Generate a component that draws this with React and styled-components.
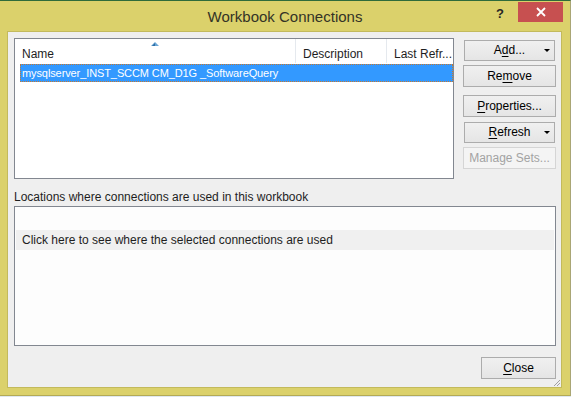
import React from "react";
import styled, { createGlobalStyle } from "styled-components";

const GlobalStyle = createGlobalStyle`
  html, body { margin: 0; padding: 0; background: #dfe8f0; }
  body { font-family: "Liberation Sans", Arial, sans-serif; }
  * { box-sizing: border-box; }
`;

const Window = styled.div`
  width: 571px;
  height: 396px;
  background: #dbd16b;
  border-top: 1px solid #2f6b3a;
  border-right: 1px solid #a9a675;
  border-bottom: 1px solid #b3aa55;
  display: flex;
  flex-direction: column;
  padding-left: 7px;
  padding-right: 8px;
`;

const TitleBar = styled.div`
  height: 30px;
  display: grid;
  grid-template-columns: 1fr auto 1fr;
  align-items: start;
  margin-left: -7px;
  margin-right: -8px;
`;

const Title = styled.div`
  grid-column: 2;
  font-size: 15px;
  line-height: 18px;
  padding-top: 7px;
  color: #333326;
`;

const Controls = styled.div`
  grid-column: 3;
  justify-self: end;
  display: flex;
  align-items: flex-start;
  padding-top: 1px;
  padding-right: 7px;
`;

const HelpButton = styled.div`
  width: 30px;
  height: 20px;
  font-weight: bold;
  font-size: 13px;
  line-height: 20px;
  padding-top: 2px;
  text-align: center;
  color: #262626;
  margin-right: 3px;
`;

const CloseX = styled.div`
  width: 45px;
  height: 20px;
  background: #c75050;
  display: flex;
  align-items: center;
  justify-content: center;
`;

const Client = styled.div`
  position: relative;
  width: 555px;
  height: 357px;
  border: 1px solid #c3ba5c;
  background: #efefef;
  padding: 6px 5px 0 6px;
  display: flex;
  flex-direction: column;
  font-size: 12px;
  color: #000;
`;

const TopRow = styled.div`
  display: flex;
  align-items: flex-start;
`;

const ListBox = styled.div`
  width: 440px;
  height: 141px;
  border: 1px solid #828790;
  background: #fff;
  display: flex;
  flex-direction: column;
`;

const HeaderRow = styled.div`
  display: flex;
  height: 25px;
  background: #fff;
`;

const HeaderCell = styled.div`
  position: relative;
  width: ${(p) => p.$w}px;
  height: 24px;
  padding: 8px 0 0 7px;
  line-height: 15px;
  border-right: ${(p) => (p.$last ? "none" : "1px solid #e5e9ee")};
  white-space: nowrap;
  overflow: hidden;
  color: #1e1e1e;
`;

const SortArrow = styled.svg`
  position: absolute;
  top: 3px;
  left: 50%;
  margin-left: -4px;
`;

const SelectedRow = styled.div`
  margin-left: 5px;
  height: 18px;
  background: #3399ff;
  border: 1px dotted #c9782c;
  color: #fff;
  padding-left: 1px;
  font-size: 11px;
  line-height: 16px;
  letter-spacing: -0.1px;
  white-space: nowrap;
`;

const ButtonColumn = styled.div`
  margin-left: 9px;
  width: 93px;
  padding-top: 1px;
  display: flex;
  flex-direction: column;
`;

const Slot = styled.div`
  height: 22px;
  margin-top: ${(p) => p.$gap || 0}px;
  padding: ${(p) => (p.$split ? "1px 1px 0 1px" : "0")};
  display: flex;
`;

const Button = styled.div`
  position: relative;
  flex: 1;
  height: ${(p) => (p.$split ? 21 : 22)}px;
  border: 1px solid ${(p) => (p.$disabled ? "#d5d5d5" : "#acacac")};
  background: ${(p) =>
    p.$disabled ? "#f4f4f4" : "linear-gradient(#f0f0f0, #e5e5e5)"};
  color: ${(p) => (p.$disabled ? "#a3a3a3" : "#000")};
  display: flex;
  align-items: center;
  justify-content: center;
  line-height: 15px;
  white-space: nowrap;
`;

const DropArrow = styled.svg`
  position: absolute;
  right: 4px;
  top: 8px;
`;

const U = styled.span`
  text-decoration: underline;
  text-underline-offset: 2px;
`;

const SectionLabel = styled.div`
  margin-top: 10px;
  line-height: 17px;
  color: #1e1e1e;
`;

const LocationsBox = styled.div`
  width: 542px;
  height: 140px;
  border: 1px solid #828790;
  background: #fdfdfd;
  padding: 23px 1px 0 1px;
`;

const LocationRow = styled.div`
  height: 20px;
  background: #f0f0f0;
  padding-left: 6px;
  line-height: 20px;
  color: #1e1e1e;
`;

const Footer = styled.div`
  margin-top: 11px;
  display: flex;
  justify-content: flex-end;
`;

const CloseButton = styled(Button)`
  flex: none;
  width: 75px;
  height: 22px;
`;

const Grip = styled.svg`
  position: absolute;
  right: 0;
  bottom: 0;
`;

const Arrow = () => (
  <DropArrow width="6" height="4" viewBox="0 0 6 4">
    <path d="M0 0 H6 L3 3 Z" fill="#000" />
  </DropArrow>
);

export default function App() {
  return (
    <>
      <GlobalStyle />
      <Window>
        <TitleBar>
          <Title>Workbook Connections</Title>
          <Controls>
            <HelpButton>?</HelpButton>
            <CloseX>
              <svg width="10" height="10" viewBox="0 0 10 10">
                <path d="M1 1 L9 9 M9 1 L1 9" stroke="#fff" strokeWidth="1.8" />
              </svg>
            </CloseX>
          </Controls>
        </TitleBar>
        <Client>
          <TopRow>
            <ListBox>
              <HeaderRow>
                <HeaderCell $w={281}>
                  <SortArrow width="8" height="4" viewBox="0 0 8 4">
                    <path d="M0 4 L4 0 L8 4 Z" fill="#6aa6d6" />
                    <path d="M1 4 L4 1 L4 4 Z" fill="#2f6fa6" />
                  </SortArrow>
                  Name
                </HeaderCell>
                <HeaderCell $w={91}>Description</HeaderCell>
                <HeaderCell $w={66} $last>Last Refr...</HeaderCell>
              </HeaderRow>
              <SelectedRow>mysqlserver_INST_SCCM CM_D1G _SoftwareQuery</SelectedRow>
            </ListBox>
            <ButtonColumn>
              <Slot $split>
                <Button $split>
                  <span>A<U>d</U>d...</span>
                  <Arrow />
                </Button>
              </Slot>
              <Slot $gap={4}>
                <Button>
                  <span>Re<U>m</U>ove</span>
                </Button>
              </Slot>
              <Slot $gap={8}>
                <Button>
                  <span><U>P</U>roperties...</span>
                </Button>
              </Slot>
              <Slot $gap={4} $split>
                <Button $split>
                  <span><U>R</U>efresh</span>
                  <Arrow />
                </Button>
              </Slot>
              <Slot $gap={4}>
                <Button $disabled>Manage Sets...</Button>
              </Slot>
            </ButtonColumn>
          </TopRow>
          <SectionLabel>Locations where connections are used in this workbook</SectionLabel>
          <LocationsBox>
            <LocationRow>Click here to see where the selected connections are used</LocationRow>
          </LocationsBox>
          <Footer>
            <CloseButton>
              <span><U>C</U>lose</span>
            </CloseButton>
          </Footer>
          <Grip width="8" height="8" viewBox="0 0 8 8">
            <path d="M7 1 L1 7 M7 4 L4 7" stroke="#a0a0a0" strokeWidth="1" />
          </Grip>
        </Client>
      </Window>
    </>
  );
}
